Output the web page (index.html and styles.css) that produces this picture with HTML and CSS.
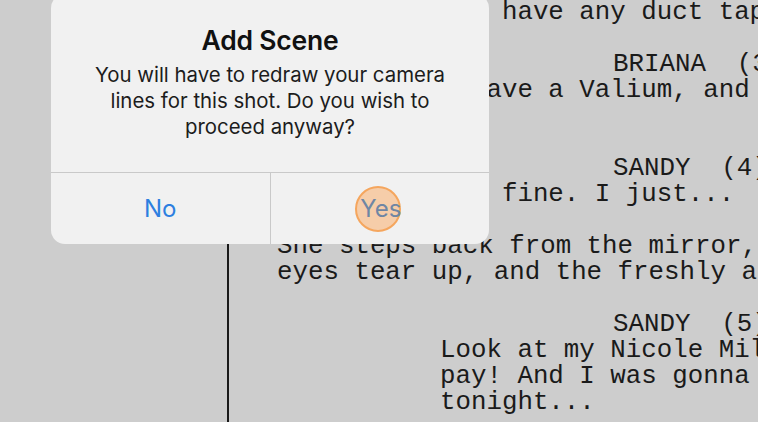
FILE: index.html
```html
<!DOCTYPE html>
<html>
<head>
<meta charset="utf-8">
<link rel="stylesheet" href="styles.css">
</head>
<body>
<div class="screen">
  <div class="margin"></div>
  <div class="page">
    <div class="line dlg">you have any duct tape?</div>
    <div class="line blank"></div>
    <div class="line chr">BRIANA  (3)</div>
    <div class="line dlg">I have a Valium, and</div>
    <div class="line blank"></div>
    <div class="line blank"></div>
    <div class="line chr">SANDY  (4)</div>
    <div class="line dlg">I'm fine. I just...</div>
    <div class="line blank"></div>
    <div class="line act">She steps back from the mirror, her</div>
    <div class="line act">eyes tear up, and the freshly applied</div>
    <div class="line blank"></div>
    <div class="line chr">SANDY  (5)</div>
    <div class="line dlg">Look at my Nicole Miller!</div>
    <div class="line dlg">pay! And I was gonna wear it</div>
    <div class="line dlg">tonight...</div>
  </div>
  <div class="alert">
    <div class="alert-body">
      <div class="alert-title">Add Scene</div>
      <div class="alert-msg">You will have to redraw your camera lines for this shot. Do you wish to proceed anyway?</div>
    </div>
    <div class="alert-actions">
      <div class="btn no">No</div>
      <div class="btn yes"><span class="tap"></span><span class="yes-label">Yes</span></div>
    </div>
  </div>
</div>
</body>
</html>
```
FILE: styles.css
```css
html, body {
  margin: 0;
  padding: 0;
}
body {
  width: 758px;
  height: 422px;
  overflow: hidden;
  background: #cdcdcd;
}
.screen {
  position: relative;
  width: 758px;
  height: 422px;
  display: flex;
  overflow: hidden;
}
.margin {
  width: 227px;
  flex: none;
}
.page {
  flex: 1;
  min-width: 0;
  border-left: 2px solid #1a1a1a;
  padding-left: 48px;
  font-family: "Liberation Mono", "Courier New", monospace;
  font-size: 25.8px;
  color: #1a1a1a;
  overflow: hidden;
}
.line {
  height: 26px;
  line-height: 26px;
  white-space: pre;
}
.dlg { padding-left: 163px; }
.chr { padding-left: 336px; }
.act { padding-left: 0; }
.alert {
  position: absolute;
  left: 51px;
  top: -6px;
  width: 438px;
  height: 250px;
  background: #f1f1f1;
  border-radius: 14px;
  display: flex;
  flex-direction: column;
  font-family: "Inter", "Noto Sans", sans-serif;
}
.alert-body {
  height: 179px;
  box-sizing: border-box;
  padding: 31px 20px 0;
  text-align: center;
  border-bottom: 1px solid #c9c9c9;
}
.alert-title {
  font-size: 26.5px;
  font-weight: 600;
  color: #111;
  line-height: 30px;
  letter-spacing: -0.2px;
}
.alert-msg {
  margin-top: 7px;
  font-size: 20.4px;
  line-height: 26px;
  color: #1c1c1c;
  padding: 0 8px;
}
.alert-actions {
  flex: 1;
  display: flex;
}
.btn {
  flex: 1;
  display: flex;
  align-items: center;
  justify-content: center;
  font-size: 24px;
  color: #2d7fe0;
  position: relative;
}
.no { border-right: 1px solid #c9c9c9; }
.yes-label {
  color: #6f86a4;
  position: relative;
  margin-left: 2px;
}
.tap {
  position: absolute;
  left: 84px;
  top: 13px;
  width: 46px;
  height: 46px;
  border-radius: 50%;
  background: rgba(250, 175, 110, 0.55);
  border: 2px solid #f5a65e;
  box-sizing: border-box;
}
```
